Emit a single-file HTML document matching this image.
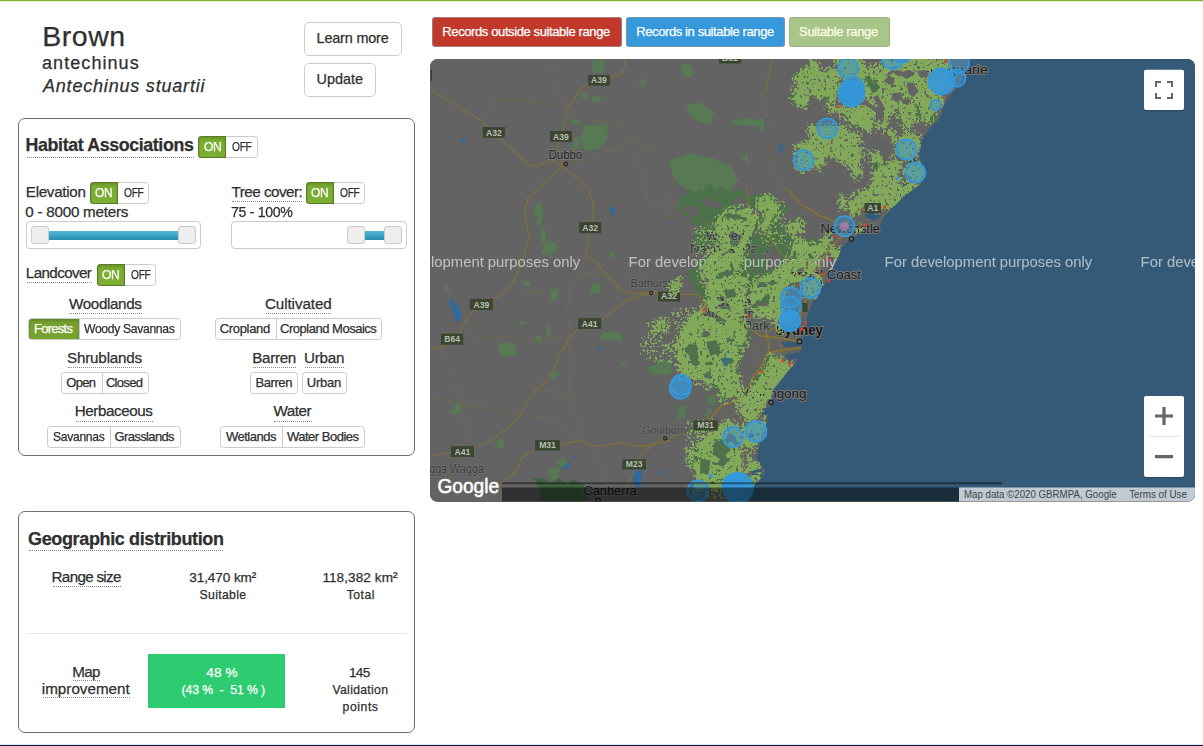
<!DOCTYPE html>
<html><head><meta charset="utf-8"><title>Brown antechinus</title>
<style>
*{box-sizing:border-box;margin:0;padding:0}
html,body{width:1203px;height:746px;overflow:hidden;background:#fff}
body{font-family:"Liberation Sans",sans-serif;color:#333;position:relative;font-size:14px}
.a{position:absolute;white-space:nowrap;line-height:1}
.t{position:absolute;white-space:nowrap;line-height:1;color:#2f2f2f;-webkit-text-stroke:0.25px}
.u{position:absolute;height:1px;border-top:1px dotted #8a8a8a}
.btn{border:1px solid #ccc;border-radius:5px;background:#fff}
.panel{border:1px solid #6e6e6e;border-radius:7px;background:#fff}
.tg{border:1px solid #ccc;border-radius:3.5px;background:#fff;height:22px}
.tg i{position:absolute;left:-1px;top:-1px;bottom:-1px;width:28px;background:#7cae33;border:1px solid rgba(0,0,0,.28);border-radius:3.5px 0 0 3.5px;box-shadow:inset 0 2px 3px rgba(0,0,0,.15)}
.tg b{position:absolute;font-weight:normal;font-size:12.2px;line-height:1;top:5px;letter-spacing:-0.3px}
.bg{border:1px solid #ccc;border-radius:3.5px;background:#fff;height:22px;overflow:hidden}
.bg i{position:absolute;top:0;bottom:0;width:1px;background:#ccc}
.bg em{position:absolute;top:0;bottom:0;left:0;background:#78a22f;box-shadow:inset 0 2px 3px rgba(0,0,0,.18)}
.sl{border:1px solid #ccc;border-radius:4px;background:#fff}
.sl i{position:absolute;display:block}
.sl .bar{top:9px;height:9px;background:linear-gradient(#55b9d8,#3aa4c6 50%,#2b8cab)}
.sl .hd{top:4px;width:18px;height:18px;border:1px solid #ccc;border-radius:3px;background:#eee}
.lg{border-radius:3px;height:30px;border:1px solid rgba(150,150,150,.7)}
</style></head><body>
<div class="a" style="left:0;top:0;width:1203px;height:1px;background:#7db52f"></div><div class="a" style="left:0;top:1px;width:1203px;height:1px;background:#e3efd2"></div>
<div class="a" style="left:0;top:745px;width:1203px;height:1px;background:#0b1c4e"></div><div class="a" style="left:0;top:744px;width:1203px;height:1px;background:#e4e7ee"></div>
<div class="a btn" style="left:304px;top:22px;width:98px;height:34px"></div>
<div class="a btn" style="left:304px;top:63px;width:72px;height:34px"></div>
<div class="a panel" style="left:18px;top:118px;width:397px;height:338px"></div>
<div class="a panel" style="left:18px;top:511px;width:397px;height:222px"></div>
<div class="a tg" style="left:198px;top:136px;width:60px"><i></i></div>
<div class="a tg" style="left:90px;top:182px;width:59px"><i></i></div>
<div class="a tg" style="left:306px;top:182px;width:59px"><i></i></div>
<div class="a tg" style="left:97px;top:264px;width:59px"><i></i></div>
<div class="a sl" style="left:26px;top:221px;width:175px;height:28px"><i class="bar" style="left:14px;width:147px"></i><i class="hd" style="left:4px"></i><i class="hd" style="left:151px"></i></div>
<div class="a sl" style="left:231px;top:221px;width:176px;height:28px"><i class="bar" style="left:125px;width:35px"></i><i class="hd" style="left:115px"></i><i class="hd" style="left:152px"></i></div>
<div class="a bg" style="left:28px;top:318px;width:153px"><em style="width:50px"></em><i style="left:50px"></i></div>
<div class="a bg" style="left:215px;top:318px;width:167px"><i style="left:60px"></i></div>
<div class="a bg" style="left:61px;top:372px;width:88px"><i style="left:40px"></i></div>
<div class="a bg" style="left:250px;top:372px;width:48px"></div>
<div class="a bg" style="left:302px;top:372px;width:45px"></div>
<div class="a bg" style="left:47px;top:426px;width:134px"><i style="left:62px"></i></div>
<div class="a bg" style="left:220px;top:426px;width:145px"><i style="left:61px"></i></div>
<div class="a" style="left:26px;top:633px;width:381px;height:1px;background:#e7e7e7"></div>
<div class="a" style="left:148px;top:654px;width:137px;height:54px;background:#2ecc71"></div>
<div class="a lg" style="left:432px;top:17px;width:190px;background:#c0392b"></div>
<div class="a lg" style="left:626px;top:17px;width:159px;background:#3498db"></div>
<div class="a lg" style="left:789px;top:17px;width:101px;background:#a9c68a;border-color:rgba(150,160,140,.5)"></div>
<div class="u" style="left:27px;top:157px;width:167px"></div>
<div class="u" style="left:232px;top:201px;width:70px"></div>
<div class="u" style="left:27px;top:282px;width:65px"></div>
<div class="u" style="left:69px;top:313px;width:73px"></div>
<div class="u" style="left:266px;top:313px;width:65px"></div>
<div class="u" style="left:68px;top:367px;width:74px"></div>
<div class="u" style="left:253px;top:367px;width:43px"></div>
<div class="u" style="left:305px;top:367px;width:39px"></div>
<div class="u" style="left:76px;top:421px;width:77px"></div>
<div class="u" style="left:274px;top:421px;width:38px"></div>
<div class="u" style="left:29px;top:550px;width:194px"></div>
<div class="u" style="left:53px;top:586px;width:68px"></div>
<div class="u" style="left:73px;top:680px;width:27px"></div>
<div class="u" style="left:43px;top:697px;width:87px"></div>
<div class="t" style="left:42.3px;top:22px;font-size:28.5px;letter-spacing:0.5px;transform:scaleX(1.0);transform-origin:0 0;">Brown</div>
<div class="t" style="left:42.0px;top:54px;font-size:18px;letter-spacing:1.07px;transform:scaleX(1.0);transform-origin:0 0;">antechinus</div>
<div class="t" style="left:43.0px;top:77px;font-size:18px;letter-spacing:0.8px;transform:scaleX(1.0);transform-origin:0 0;font-style:italic;">Antechinus stuartii</div>
<div class="t" style="left:316.6px;top:31px;font-size:14.4px;letter-spacing:-0.16px;transform:scaleX(1.0);transform-origin:0 0;">Learn more</div>
<div class="t" style="left:316.6px;top:72px;font-size:14.4px;letter-spacing:0.0px;transform:scaleX(1.0);transform-origin:0 0;">Update</div>
<div class="t" style="left:25.6px;top:137px;font-size:17.8px;letter-spacing:-0.37px;transform:scaleX(1.0);transform-origin:0 0;font-weight:bold;">Habitat Associations</div>
<div class="t" style="left:25.8px;top:184px;font-size:15.2px;letter-spacing:-0.3px;transform:scaleX(1.0);transform-origin:0 0;">Elevation</div>
<div class="t" style="left:25.3px;top:204px;font-size:15.2px;letter-spacing:-0.24px;transform:scaleX(1.0);transform-origin:0 0;">0 - 8000 meters</div>
<div class="t" style="left:231.6px;top:184px;font-size:15.2px;letter-spacing:-0.52px;transform:scaleX(1.0);transform-origin:0 0;">Tree cover:</div>
<div class="t" style="left:230.8px;top:204px;font-size:15.2px;letter-spacing:-0.35px;transform:scaleX(0.9308);transform-origin:0 0;">75 - 100%</div>
<div class="t" style="left:25.8px;top:265px;font-size:15.2px;letter-spacing:-0.6px;transform:scaleX(1.0);transform-origin:0 0;">Landcover</div>
<div class="t" style="left:69.0px;top:296px;font-size:15.2px;letter-spacing:-0.35px;transform:scaleX(1.0);transform-origin:0 0;">Woodlands</div>
<div class="t" style="left:264.9px;top:296px;font-size:15.2px;letter-spacing:-0.07px;transform:scaleX(1.0);transform-origin:0 0;">Cultivated</div>
<div class="t" style="left:67.0px;top:350px;font-size:15.2px;letter-spacing:-0.18px;transform:scaleX(1.0);transform-origin:0 0;">Shrublands</div>
<div class="t" style="left:252.3px;top:350px;font-size:15.2px;letter-spacing:-0.32px;transform:scaleX(1.0);transform-origin:0 0;">Barren</div>
<div class="t" style="left:304.0px;top:350px;font-size:15.2px;letter-spacing:-0.25px;transform:scaleX(1.0);transform-origin:0 0;">Urban</div>
<div class="t" style="left:74.8px;top:403px;font-size:15.2px;letter-spacing:-0.42px;transform:scaleX(1.0);transform-origin:0 0;">Herbaceous</div>
<div class="t" style="left:273.6px;top:403px;font-size:15.2px;letter-spacing:-0.5px;transform:scaleX(1.0);transform-origin:0 0;">Water</div>
<div class="t" style="left:34.0px;top:322px;font-size:13px;letter-spacing:-0.73px;transform:scaleX(1.0);transform-origin:0 0;color:#fff;">Forests</div>
<div class="t" style="left:84.4px;top:322px;font-size:13px;letter-spacing:-0.35px;transform:scaleX(0.9351);transform-origin:0 0;">Woody Savannas</div>
<div class="t" style="left:219.7px;top:322px;font-size:13px;letter-spacing:-0.31px;transform:scaleX(1.0);transform-origin:0 0;">Cropland</div>
<div class="t" style="left:280.0px;top:322px;font-size:13px;letter-spacing:-0.48px;transform:scaleX(1.0);transform-origin:0 0;">Cropland Mosaics</div>
<div class="t" style="left:66.2px;top:376px;font-size:13px;letter-spacing:-0.67px;transform:scaleX(1.0);transform-origin:0 0;">Open</div>
<div class="t" style="left:105.9px;top:376px;font-size:13px;letter-spacing:-0.68px;transform:scaleX(1.0);transform-origin:0 0;">Closed</div>
<div class="t" style="left:255.4px;top:376px;font-size:13px;letter-spacing:-0.4px;transform:scaleX(1.0);transform-origin:0 0;">Barren</div>
<div class="t" style="left:306.8px;top:376px;font-size:13px;letter-spacing:-0.25px;transform:scaleX(1.0);transform-origin:0 0;">Urban</div>
<div class="t" style="left:52.5px;top:430px;font-size:13px;letter-spacing:-0.35px;transform:scaleX(0.9353);transform-origin:0 0;">Savannas</div>
<div class="t" style="left:114.6px;top:430px;font-size:13px;letter-spacing:-0.64px;transform:scaleX(1.0);transform-origin:0 0;">Grasslands</div>
<div class="t" style="left:225.9px;top:430px;font-size:13px;letter-spacing:-0.49px;transform:scaleX(1.0);transform-origin:0 0;">Wetlands</div>
<div class="t" style="left:286.9px;top:430px;font-size:13px;letter-spacing:-0.49px;transform:scaleX(1.0);transform-origin:0 0;">Water Bodies</div>
<div class="t" style="left:28.1px;top:530px;font-size:18px;letter-spacing:-0.37px;transform:scaleX(1.0);transform-origin:0 0;font-weight:bold;">Geographic distribution</div>
<div class="t" style="left:51.6px;top:569px;font-size:15.2px;letter-spacing:-0.69px;transform:scaleX(1.0);transform-origin:0 0;">Range size</div>
<div class="t" style="left:189.2px;top:571px;font-size:13.6px;letter-spacing:-0.09px;transform:scaleX(1.0);transform-origin:0 0;">31,470 km²</div>
<div class="t" style="left:199.6px;top:589px;font-size:12.2px;letter-spacing:0.34px;transform:scaleX(1.0);transform-origin:0 0;">Suitable</div>
<div class="t" style="left:322.4px;top:571px;font-size:13.6px;letter-spacing:0.06px;transform:scaleX(1.0);transform-origin:0 0;">118,382 km²</div>
<div class="t" style="left:346.8px;top:589px;font-size:12.2px;letter-spacing:0.45px;transform:scaleX(1.0);transform-origin:0 0;">Total</div>
<div class="t" style="left:206.2px;top:666px;font-size:13.6px;letter-spacing:0.13px;transform:scaleX(1.0);transform-origin:0 0;color:#fff;">48 %</div>
<div class="t" style="left:181.5px;top:684px;font-size:12.2px;letter-spacing:-0.07px;transform:scaleX(1.0);transform-origin:0 0;color:#fff;">(43 %  -  51 % )</div>
<div class="t" style="left:72.2px;top:664px;font-size:15.2px;letter-spacing:-0.6px;transform:scaleX(1.0);transform-origin:0 0;">Map</div>
<div class="t" style="left:41.8px;top:681px;font-size:15.2px;letter-spacing:0.02px;transform:scaleX(1.0);transform-origin:0 0;">improvement</div>
<div class="t" style="left:348.9px;top:666px;font-size:13.6px;letter-spacing:-0.6px;transform:scaleX(1.0);transform-origin:0 0;">145</div>
<div class="t" style="left:332.5px;top:684px;font-size:12.2px;letter-spacing:0.31px;transform:scaleX(1.0);transform-origin:0 0;">Validation</div>
<div class="t" style="left:342.6px;top:701px;font-size:12.2px;letter-spacing:0.56px;transform:scaleX(1.0);transform-origin:0 0;">points</div>
<div class="t" style="left:442.3px;top:25px;font-size:13px;letter-spacing:-0.39px;transform:scaleX(1.0);transform-origin:0 0;color:#fff;">Records outside suitable range</div>
<div class="t" style="left:636.2px;top:25px;font-size:13px;letter-spacing:-0.39px;transform:scaleX(1.0);transform-origin:0 0;color:#fff;">Records in suitable range</div>
<div class="t" style="left:799.1px;top:25px;font-size:13px;letter-spacing:-0.37px;transform:scaleX(1.0);transform-origin:0 0;color:#fffbe8;">Suitable range</div>
<div class="t" style="left:203.9px;top:140px;font-size:13px;letter-spacing:-0.35px;transform:scaleX(0.9236);transform-origin:0 0;color:#fff;">ON</div>
<div class="t" style="left:232.2px;top:140px;font-size:13px;letter-spacing:-0.35px;transform:scaleX(0.7843);transform-origin:0 0;">OFF</div>
<div class="t" style="left:95.2px;top:186px;font-size:13px;letter-spacing:-0.35px;transform:scaleX(0.9236);transform-origin:0 0;color:#fff;">ON</div>
<div class="t" style="left:123.9px;top:186px;font-size:13px;letter-spacing:-0.35px;transform:scaleX(0.7843);transform-origin:0 0;">OFF</div>
<div class="t" style="left:311.1px;top:186px;font-size:13px;letter-spacing:-0.35px;transform:scaleX(0.9236);transform-origin:0 0;color:#fff;">ON</div>
<div class="t" style="left:339.9px;top:186px;font-size:13px;letter-spacing:-0.35px;transform:scaleX(0.7843);transform-origin:0 0;">OFF</div>
<div class="t" style="left:102.2px;top:268px;font-size:13px;letter-spacing:-0.35px;transform:scaleX(0.9236);transform-origin:0 0;color:#fff;">ON</div>
<div class="t" style="left:131.0px;top:268px;font-size:13px;letter-spacing:-0.35px;transform:scaleX(0.7843);transform-origin:0 0;">OFF</div>
<div class="a" id="map" style="left:430px;top:59px;width:765px;height:443px;border-radius:8px;overflow:hidden;background:#636363">
<svg width="765" height="443" viewBox="430 59 765 443" style="position:absolute;left:0;top:0" font-family="Liberation Sans, sans-serif">
<rect x="430" y="59" width="765" height="442" fill="#636363"/>
<path d="M584.8 125.3 L607.9 124.3 L606.9 139.4 L598.8 149.5 L584.8 150.5 L580.8 139.4Z" fill="#577a55"/>
<path d="M570.7 118.3 L580.8 121.3 L579.7 126.3 L571.7 124.3Z" fill="#577a55"/>
<path d="M573.7 137.4 L579.7 137.8 L578.7 149.5 L572.3 149.1Z" fill="#577a55"/>
<path d="M592.8 60.0 L604.9 60.0 L602.9 73.1 L593.8 72.7 L590.8 66.0Z" fill="#577a55"/>
<path d="M580.8 93.2 L586.8 93.6 L586.4 98.4 L581.2 98.0Z" fill="#577a55"/>
<path d="M638.0 85.1 L642.1 81.5 L645.5 86.7Z" fill="#577a55"/>
<path d="M535.5 208.9 L537.5 202.1 L540.6 203.3 L541.8 208.9Z" fill="#577a55"/>
<path d="M532.5 213.1 L536.5 203.0 L541.0 202.4 L543.8 212.1 L541.0 226.1 L536.5 224.5 L537.7 217.1Z" fill="#577a55"/>
<path d="M540.2 227.1 L544.6 230.2 L546.2 241.2 L541.6 243.2Z" fill="#577a55"/>
<path d="M544.6 242.6 L554.6 242.2 L559.6 249.2 L552.6 252.3 L550.6 258.3 L545.6 254.3 L541.0 254.7Z" fill="#577a55"/>
<path d="M592.4 282.0 L600.9 284.4 L599.8 292.9 L589.8 293.7Z" fill="#577a55"/>
<path d="M550.6 289.4 L559.6 288.4 L557.0 300.5 L550.6 299.5Z" fill="#577a55"/>
<path d="M521.5 280.0 L530.1 282.0 L529.3 286.8 L524.5 286.0Z" fill="#577a55"/>
<path d="M608.9 252.7 L613.3 251.3 L614.9 259.5 L610.5 257.1Z" fill="#577a55"/>
<path d="M548.2 322.6 L550.6 330.7 L551.6 337.1 L546.2 335.1 L546.6 328.6Z" fill="#577a55"/>
<path d="M534.5 336.7 L541.0 334.3 L541.8 343.7 L537.5 343.1Z" fill="#577a55"/>
<path d="M520.1 321.0 L526.1 321.8 L525.5 325.0 L520.5 323.8Z" fill="#577a55"/>
<path d="M600.9 335.1 L604.9 333.1 L604.5 340.7 L600.1 339.5Z" fill="#577a55"/>
<path d="M606.9 332.7 L613.3 331.1 L612.5 338.7 L607.7 337.9Z" fill="#577a55"/>
<path d="M614.9 333.7 L621.0 334.3 L621.4 341.7 L615.9 340.7Z" fill="#577a55"/>
<path d="M445.7 285.4 L448.5 284.0 L449.3 292.5 L446.5 292.1Z" fill="#577a55"/>
<path d="M498.3 345.7 L506.4 343.1 L508.8 349.9 L499.3 349.9Z" fill="#577a55"/>
<path d="M498.6 345.0 L515.8 345.0 L515.4 355.7 L507.2 356.8 L502.9 351.4 L499.1 352.5Z" fill="#577a55"/>
<path d="M551.2 372.9 L555.5 370.7 L559.1 374.0 L554.4 377.2 L551.8 380.4Z" fill="#577a55"/>
<path d="M450.4 413.6 L454.0 405.5 L457.0 415.8Z" fill="#577a55"/>
<path d="M496.9 441.9 L502.9 441.5 L502.5 449.2 L497.6 448.4Z" fill="#577a55"/>
<path d="M655.2 362.2 L670.0 360.0 L670.0 375.0 L659.5 374.6Z" fill="#577a55"/>
<path d="M620.9 361.7 L625.2 361.1 L625.2 366.0 L621.3 366.0Z" fill="#577a55"/>
<path d="M557.0 459.7 L564.0 458.7 L567.3 465.1 L560.8 468.3Z" fill="#577a55"/>
<path d="M548.0 469.4 L559.8 467.3 L558.7 479.0 L552.3 480.1Z" fill="#577a55"/>
<path d="M534.0 478.0 L545.8 479.0 L550.1 484.4 L558.7 478.0 L567.3 484.4 L572.6 479.0 L586.6 486.6 L587.6 501.6 L541.5 501.6 L538.3 486.6Z" fill="#3f6340"/>
<path d="M681.0 66.0 L688.0 63.0 L694.0 72.0 L690.0 79.0 L683.0 76.0Z" fill="#577a55"/>
<path d="M686.0 105.0 L700.0 102.0 L714.0 112.0 L710.0 124.0 L698.0 121.0 L690.0 116.0Z" fill="#577a55"/>
<path d="M731.0 121.0 L748.0 118.0 L763.0 121.0 L760.0 127.0 L745.0 125.0 L733.0 126.0Z" fill="#577a55"/>
<path d="M641.0 82.0 L644.0 78.0 L647.0 84.0Z" fill="#577a55"/>
<path d="M592.0 97.0 L600.0 95.0 L601.0 102.0 L593.0 103.0Z" fill="#577a55"/>
<path d="M669.0 160.0 L690.0 153.0 L712.0 158.0 L730.0 165.0 L738.0 180.0 L728.0 195.0 L710.0 190.0 L695.0 193.0 L680.0 185.0 L672.0 175.0Z" fill="#577a55"/>
<path d="M741.0 158.0 L747.0 152.0 L750.0 164.0Z" fill="#577a55"/>
<path d="M498.0 345.0 L510.0 342.0 L516.0 352.0 L508.0 358.0 L500.0 355.0Z" fill="#577a55"/>
<path d="M602.0 333.0 L615.0 331.0 L624.0 336.0 L618.0 341.0 L604.0 340.0Z" fill="#577a55"/>
<path d="M648.0 367.0 L660.0 364.0 L669.0 369.0 L664.0 375.0 L650.0 374.0Z" fill="#577a55"/>
<path d="M455.0 404.0 L460.0 402.0 L462.0 412.0 L456.0 414.0Z" fill="#577a55"/>
<path d="M497.0 440.0 L503.0 439.0 L504.0 448.0 L498.0 448.0Z" fill="#577a55"/>
<g filter="url(#texpark)"><path d="M678.2 200.1 L686.2 192.0 L700.3 189.0 L752.6 189.0 L760.6 196.0 L768.6 196.0 L780.7 206.1 L784.7 216.1 L780.7 224.2 L788.7 230.2 L796.8 222.2 L802.8 226.2 L800.8 236.2 L808.8 242.3 L820.9 240.3 L824.9 246.3 L816.9 256.3 L808.8 266.4 L800.8 274.4 L792.8 280.5 L784.7 284.5 L780.7 290.5 L778.7 302.6 L768.6 302.6 L760.6 310.6 L752.6 302.6 L744.5 294.5 L736.5 290.5 L728.4 294.5 L720.4 302.6 L716.4 310.6 L708.3 314.6 L704.3 306.6 L700.3 294.5 L698.3 284.5 L692.3 278.4 L694.3 270.4 L702.3 266.4 L706.3 258.3 L704.3 250.3 L698.3 248.3 L692.3 240.3 L696.3 230.2 L692.3 222.2 L684.2 214.1 L676.2 206.1Z" fill="#4d724b"/></g>
<g filter="url(#texpark)"><path d="M686.2 339.9 L690.3 320.7 L700.3 310.6 L712.4 302.6 L744.5 298.5 L752.6 310.6 L748.5 330.7 L746.5 342.8 L740.5 370.9 L736.5 391.0 L724.4 401.1 L716.4 391.0 L706.3 381.0 L696.3 370.9 L688.2 362.9 L680.2 354.8 L683.2 346.8Z" fill="#4d724b"/></g>
<path d="M760.0 195.7 L772.1 193.7 L778.1 208.9 L760.0 208.9Z" fill="#577a55"/>
<path d="M760.0 119.3 L763.0 117.3 L765.0 129.4 L761.0 133.4Z" fill="#577a55"/>
<path d="M864.5 75.1 L872.6 73.1 L880.6 89.2 L878.6 97.2 L870.6 95.2Z" fill="#4d724b"/>
<path d="M890.7 79.1 L900.7 77.1 L904.7 95.2 L900.7 107.2 L892.7 99.2Z" fill="#4d724b"/>
<path d="M912.8 105.2 L920.8 103.2 L920.8 119.3 L914.8 119.3Z" fill="#4d724b"/>
<path d="M796.2 71.1 L812.3 69.1 L810.3 87.1 L800.2 89.2Z" fill="#4d724b"/>
<path d="M930.9 114.3 L937.9 113.3 L936.9 123.3 L930.9 124.3Z" fill="#4d724b"/>
<path d="M844.4 115.3 L854.5 113.3 L864.5 125.3 L856.5 129.4Z" fill="#4d724b"/>
<path d="M820.3 89.2 L828.3 87.1 L830.4 99.2 L822.3 99.2Z" fill="#4d724b"/>
<path d="M872.6 159.5 L880.6 155.5 L882.6 171.6 L874.6 171.6Z" fill="#4d724b"/>
<path d="M788.1 95.2 L796.2 93.2 L806.2 106.2 L800.2 107.2Z" fill="#4d724b"/>
<g filter="url(#texpark)"><path d="M760.6 370.2 L772.7 356.1 L780.7 360.2 L776.7 374.2 L768.6 390.3 L760.6 402.4 L752.6 396.3 L756.6 382.3Z" fill="#4d724b"/></g>
<g filter="url(#texpark)"><path d="M688.2 450.6 L700.3 442.6 L716.4 434.5 L732.5 442.6 L740.5 458.6 L744.5 479.9 L736.5 490.8 L700.3 490.8 L692.3 470.7 L686.2 460.7Z" fill="#4d724b"/></g>
<path d="M656.1 360.2 L670.2 362.2 L672.2 372.2 L660.1 374.2Z" fill="#577a55"/>
<path d="M678.2 406.4 L686.2 405.4 L685.2 416.4 L678.2 419.4Z" fill="#577a55"/>
<path d="M706.3 396.3 L714.4 394.3 L716.4 404.4 L709.3 406.4Z" fill="#577a55"/>
<path d="M707.3 408.4 L712.4 409.4 L708.3 418.4 L704.3 417.4Z" fill="#577a55"/>
<path d="M706.3 370.2 L724.4 366.2 L720.4 378.2 L708.3 386.3Z" fill="#5a6f5a"/>
<path d="M969.3 59 L966 70 L962 80 L956.6 88.5 L947.2 99.2 L943.2 108.6 L939.2 119.3 L928.4 130 L921.7 140.8 L918.8 155.5 L921 163.5 L925.8 171.6 L920.8 183.6 L912.8 189.7 L904.7 195.7 L896.7 203.7 L890.7 209 L884 217 L880 225.2 L865.1 228.2 L855.1 236.2 L849 240.3 L841 248.3 L838 258.3 L833 266.4 L829 278.4 L820.9 288.5 L816.9 298.5 L810.9 306.6 L806.8 318.6 L806.8 330.7 L802.8 338 L800.8 350.1 L794.8 364.2 L788.7 370.2 L780.7 380.3 L772.7 390.3 L770.7 402.4 L768.6 414.4 L766.6 420.5 L764.6 434.5 L758.6 446.6 L756.6 458.6 L761.7 465.8 L764.7 471.8 L759.7 479.8 L751.7 487.8 L747.7 501 L1195 501 L1195 59Z" fill="#355a77"/>
<path d="M869.1 209.1 L880.0 208.1 L880.0 218.1 L874.2 220.2 L865.1 217.1Z" fill="#355a77"/>
<path d="M849.0 218.1 L851.1 214.1 L853.5 220.2 L850.1 225.2Z" fill="#355a77"/>
<path d="M828.9 256.3 L836.0 248.3 L839.0 250.3 L833.0 260.4 L829.9 263.4Z" fill="#355a77"/>
<path d="M825.9 235.2 L828.9 232.2 L830.6 238.2 L827.3 242.3Z" fill="#355a77"/>
<path d="M812.9 299.5 L818.9 298.5 L817.9 302.6 L812.9 303.6Z" fill="#355a77"/>
<path d="M784.7 355.1 L798.8 352.1 L799.8 357.1 L788.7 360.2Z" fill="#355a77"/>
<path d="M780.7 342.1 L800.8 341.1 L800.8 346.1 L784.7 347.1Z" fill="#355a77"/>
<path d="M760.6 410.4 L768.6 406.4 L770.7 412.4 L762.6 416.4Z" fill="#355a77"/>
<path d="M750.7 469.8 L757.7 465.8 L761.7 469.8 L760.7 478.8 L753.7 479.8Z" fill="#355a77"/>
<path d="M901.7 184.6 L910.8 181.6 L912.8 187.6 L904.7 191.7 L898.7 197.7 L894.7 195.7Z" fill="#355a77"/>
<path d="M907.7 159.5 L915.8 157.5 L917.8 161.5 L909.7 164.5Z" fill="#355a77"/>
<path d="M449.1 298.5 L453.1 299.5 L454.1 304.5 L458.1 305.5 L461.2 314.6 L460.2 320.6 L456.1 321.6 L453.1 314.6 L452.1 307.5 L449.1 304.5Z" fill="#2f6a9e"/>
<path d="M611.9 205.0 L614.5 211.1 L614.9 216.1 L611.9 214.1 L609.3 210.1Z" fill="#2f6a9e"/>
<path d="M632.7 470.5 L642.3 470.5 L640.2 486.6 L633.8 486.6Z" fill="#2f6a9e"/>
<path d="M561.9 466.2 L571.6 461.9 L567.3 469.4Z" fill="#2f6a9e"/>
<path d="M596.2 347.1 L600.5 347.6 L599.0 351.9Z" fill="#2f6a9e"/>
<path d="M659.5 471.5 L662.7 470.5 L661.6 474.8Z" fill="#2f6a9e"/>
<path d="M572.6 456.5 L574.8 455.5 L574.6 459.7Z" fill="#2f6a9e"/>
<path d="M726.4 350.1 L730.5 351.1 L728.4 360.2 L723.4 368.2 L720.4 373.2 L719.4 369.2 L724.4 360.2Z" fill="#2f6a9e"/>
<path d="M779.1 146.4 L785.1 142.4 L782.5 147.4 L781.1 153.5 L778.1 152.5Z" fill="#2f6a9e"/>
<path d="M460.2 139.8 L466.2 139.0 L464.6 143.0 L461.2 141.8Z" fill="#2f6a9e"/>
<path d="M488.3 78.1 L491.9 81.1 L490.3 81.5Z" fill="#2f6a9e"/>
<path d="M670.2 221.2 L674.2 223.2 L672.2 225.2Z" fill="#2f6a9e"/>
<path d="M659.1 471.7 L663.1 470.7 L661.1 475.7Z" fill="#2f6a9e"/>
<path d="M640.0 470.7 L642.0 471.7 L641.0 478.7 L640.0 479.7Z" fill="#2f6a9e"/>
<path d="M430.0 89.2 L482.3 121.3 L528.5 164.5 L536.5 166.5 L550.6 159.5 L562.7 165.5" fill="none" stroke="#80703a" stroke-width="1.1" stroke-linejoin="round" stroke-linecap="round"/>
<path d="M562.7 165.5 L588.8 189.7 L593.8 208.9" fill="none" stroke="#80703a" stroke-width="1.1" stroke-linejoin="round" stroke-linecap="round"/>
<path d="M562.7 165.5 L528.5 197.7 L525.5 208.9" fill="none" stroke="#80703a" stroke-width="1.1" stroke-linejoin="round" stroke-linecap="round"/>
<path d="M562.7 165.5 L557.6 147.4 L564.7 125.3 L566.7 109.3 L582.8 87.1 L596.8 79.1 L618.9 75.1 L626.0 66.0 L624.0 59.0" fill="none" stroke="#80703a" stroke-width="1.1" stroke-linejoin="round" stroke-linecap="round"/>
<path d="M482.3 121.3 L494.3 102.2 L510.4 99.2 L536.5 102.2 L568.7 108.2" fill="none" stroke="#756b4a" stroke-width="0.7" stroke-linejoin="round" stroke-linecap="round"/>
<path d="M549.6 59.0 L554.6 79.1 L568.7 108.2 L582.8 119.3 L604.9 121.3 L621.0 123.3 L633.0 139.4 L653.1 147.4 L670.0 142.4" fill="none" stroke="#756b4a" stroke-width="0.7" stroke-linejoin="round" stroke-linecap="round"/>
<path d="M633.0 139.4 L614.9 151.5 L602.9 151.5 L584.8 163.5 L570.7 159.5" fill="none" stroke="#756b4a" stroke-width="0.7" stroke-linejoin="round" stroke-linecap="round"/>
<path d="M643.1 143.4 L637.0 159.5 L645.1 179.6 L647.1 199.7 L670.0 208.9" fill="none" stroke="#756b4a" stroke-width="0.7" stroke-linejoin="round" stroke-linecap="round"/>
<path d="M593.8 198.0 L592.8 216.1 L588.8 236.2 L585.8 250.3 L588.8 258.3 L596.8 262.3 L606.9 276.4 L621.0 290.5 L631.0 293.5 L651.1 291.5 L670.0 292.5" fill="none" stroke="#80703a" stroke-width="1.1" stroke-linejoin="round" stroke-linecap="round"/>
<path d="M527.5 198.0 L524.5 212.1 L529.5 238.2 L523.5 256.3 L518.4 272.4 L510.4 286.4 L498.3 296.5 L480.3 304.5 L470.2 314.6 L463.2 324.6 L461.2 332.7 L450.1 342.7 L436.0 348.7 L430.0 349.9" fill="none" stroke="#80703a" stroke-width="1.1" stroke-linejoin="round" stroke-linecap="round"/>
<path d="M651.1 292.5 L625.0 301.5 L602.9 318.6 L578.7 328.6 L568.7 338.7 L562.7 349.9" fill="none" stroke="#80703a" stroke-width="1.1" stroke-linejoin="round" stroke-linecap="round"/>
<path d="M582.8 272.4 L570.7 280.4 L568.7 300.5 L566.7 312.6 L569.7 328.6 L568.7 349.9" fill="none" stroke="#756b4a" stroke-width="0.7" stroke-linejoin="round" stroke-linecap="round"/>
<path d="M524.5 291.5 L540.6 293.5 L552.6 287.4" fill="none" stroke="#756b4a" stroke-width="0.7" stroke-linejoin="round" stroke-linecap="round"/>
<path d="M463.2 328.6 L480.3 338.7 L506.4 336.7 L536.5 340.7 L568.7 336.7" fill="none" stroke="#756b4a" stroke-width="0.7" stroke-linejoin="round" stroke-linecap="round"/>
<path d="M585.8 250.3 L583.8 272.4 L606.9 276.4" fill="none" stroke="#756b4a" stroke-width="0.7" stroke-linejoin="round" stroke-linecap="round"/>
<path d="M649.1 200.0 L661.2 212.1 L670.0 220.1" fill="none" stroke="#756b4a" stroke-width="0.7" stroke-linejoin="round" stroke-linecap="round"/>
<path d="M564.0 345.0 L554.4 366.4 L546.9 381.5 L535.1 390.0 L524.4 407.2 L522.2 413.6 L509.4 426.5 L492.2 439.4 L474.0 447.9 L451.4 452.2 L430.0 456.5" fill="none" stroke="#80703a" stroke-width="1.1" stroke-linejoin="round" stroke-linecap="round"/>
<path d="M670.0 440.4 L653.1 444.7 L633.8 445.8 L618.7 442.6 L605.9 445.8 L593.0 445.8 L580.1 440.4 L569.4 442.6 L559.8 445.8 L535.1 450.1 L522.2 457.6 L515.8 471.5 L502.9 482.3 L494.3 495.1" fill="none" stroke="#80703a" stroke-width="1.1" stroke-linejoin="round" stroke-linecap="round"/>
<path d="M653.1 444.7 L638.0 458.7 L632.7 473.7 L629.5 482.3 L623.0 499.4" fill="none" stroke="#80703a" stroke-width="1.1" stroke-linejoin="round" stroke-linecap="round"/>
<path d="M430.0 395.4 L464.3 405.1 L522.2 413.6 L548.0 419.0 L567.3 432.9 L580.1 440.4" fill="none" stroke="#756b4a" stroke-width="0.7" stroke-linejoin="round" stroke-linecap="round"/>
<path d="M438.6 345.0 L451.4 377.2 L464.3 405.1 L462.2 415.8 L469.7 432.9 L462.2 447.9 L451.4 471.5 L442.9 495.1" fill="none" stroke="#756b4a" stroke-width="0.7" stroke-linejoin="round" stroke-linecap="round"/>
<path d="M567.3 345.0 L573.7 362.2 L568.3 381.5 L571.6 405.1 L580.1 426.5 L584.4 440.4 L593.0 447.9 L601.6 465.1 L603.7 482.3 L599.4 499.4" fill="none" stroke="#756b4a" stroke-width="0.7" stroke-linejoin="round" stroke-linecap="round"/>
<path d="M535.1 390.0 L554.4 391.1 L571.6 402.9" fill="none" stroke="#756b4a" stroke-width="0.7" stroke-linejoin="round" stroke-linecap="round"/>
<path d="M772.1 59.0 L766.0 89.2 L760.0 97.2" fill="none" stroke="#80703a" stroke-width="1.1" stroke-linejoin="round" stroke-linecap="round"/>
<path d="M760.0 109.3 L772.1 119.3 L768.0 143.4 L772.1 167.5 L784.1 187.6 L800.2 208.9" fill="none" stroke="#756b4a" stroke-width="0.8" stroke-linejoin="round" stroke-linecap="round"/>
<path d="M760.0 175.6 L770.1 171.6" fill="none" stroke="#756b4a" stroke-width="0.7" stroke-linejoin="round" stroke-linecap="round"/>
<path d="M788.7 190.0 L800.8 204.1 L810.9 210.1 L820.9 216.1 L833.0 220.2 L841.0 230.2 L845.0 236.2" fill="none" stroke="#8a742f" stroke-width="1.3" stroke-linejoin="round" stroke-linecap="round"/>
<path d="M746.5 188.0 L749.5 210.1 L760.6 226.2 L772.7 242.3 L786.7 260.4 L800.8 264.4 L814.9 270.4 L824.9 274.4" fill="none" stroke="#80703a" stroke-width="1.1" stroke-linejoin="round" stroke-linecap="round"/>
<path d="M880.0 206.1 L857.1 210.1 L847.0 222.2 L841.0 236.2 L828.9 250.3 L820.9 262.4 L818.9 274.4 L810.9 286.5 L804.8 302.6 L800.8 314.6 L798.8 326.7" fill="none" stroke="#8a742f" stroke-width="1.6" stroke-linejoin="round" stroke-linecap="round"/>
<path d="M664.1 190.0 L680.2 208.1 L704.3 222.2 L726.4 226.2 L749.5 210.1" fill="none" stroke="#756b4a" stroke-width="0.7" stroke-linejoin="round" stroke-linecap="round"/>
<path d="M640.0 294.5 L651.1 292.9 L680.2 294.5 L698.3 294.5 L708.3 310.6 L724.4 318.6 L744.5 320.7 L760.6 326.7 L780.7 330.7 L792.8 334.7" fill="none" stroke="#8a742f" stroke-width="1.2" stroke-linejoin="round" stroke-linecap="round"/>
<path d="M772.7 242.3 L760.6 250.3 L752.6 266.4 L730.5 294.5" fill="none" stroke="#756b4a" stroke-width="0.7" stroke-linejoin="round" stroke-linecap="round"/>
<path d="M800.8 264.4 L796.8 278.4 L800.8 286.5" fill="none" stroke="#756b4a" stroke-width="0.7" stroke-linejoin="round" stroke-linecap="round"/>
<path d="M752.6 330.0 L760.6 336.0 L780.7 338.0 L798.8 342.1" fill="none" stroke="#8a742f" stroke-width="1.6" stroke-linejoin="round" stroke-linecap="round"/>
<path d="M764.6 326.0 L768.6 342.1 L768.6 352.1 L800.8 348.1" fill="none" stroke="#8a742f" stroke-width="1.8" stroke-linejoin="round" stroke-linecap="round"/>
<path d="M768.6 352.1 L762.6 364.2 L752.6 378.2 L748.5 386.3 L736.5 400.4 L720.4 406.4 L714.4 414.4 L706.3 422.5" fill="none" stroke="#8a742f" stroke-width="1.8" stroke-linejoin="round" stroke-linecap="round"/>
<path d="M706.3 422.5 L690.3 432.5 L664.1 438.5 L652.1 444.6 L640.0 446.6" fill="none" stroke="#80703a" stroke-width="1.1" stroke-linejoin="round" stroke-linecap="round"/>
<path d="M780.7 338.0 L780.7 360.2 L776.7 382.3 L768.6 396.3 L760.6 414.4 L752.6 420.5 L744.5 442.6 L742.5 470.7 L740.5 479.9" fill="none" stroke="#80703a" stroke-width="1.0" stroke-linejoin="round" stroke-linecap="round"/>
<path d="M720.4 406.4 L730.5 418.4 L746.5 418.4 L760.6 414.4" fill="none" stroke="#756b4a" stroke-width="0.8" stroke-linejoin="round" stroke-linecap="round"/>
<path d="M752.6 350.1 L756.6 362.2 L748.5 370.2" fill="none" stroke="#756b4a" stroke-width="0.8" stroke-linejoin="round" stroke-linecap="round"/>
<path d="M652.1 444.6 L646.0 454.6 L640.0 450.6" fill="none" stroke="#756b4a" stroke-width="0.8" stroke-linejoin="round" stroke-linecap="round"/>
<rect x="588.2" y="75.0" width="21.7" height="10.7" fill="#3b4630"/><text x="599.0" y="83.4" font-size="8.6" font-weight="bold" fill="#b9bdb2" text-anchor="middle">A39</text>
<rect x="482.9" y="127.0" width="22.1" height="10.8" fill="#3b4630"/><text x="493.9" y="135.5" font-size="8.6" font-weight="bold" fill="#b9bdb2" text-anchor="middle">A32</text>
<rect x="550.0" y="131.0" width="21.9" height="10.8" fill="#3b4630"/><text x="561.0" y="139.5" font-size="8.6" font-weight="bold" fill="#b9bdb2" text-anchor="middle">A39</text>
<rect x="579.1" y="222.1" width="22.2" height="11.1" fill="#3b4630"/><text x="590.2" y="230.9" font-size="8.6" font-weight="bold" fill="#b9bdb2" text-anchor="middle">A32</text>
<rect x="469.8" y="298.9" width="23.1" height="11.1" fill="#3b4630"/><text x="481.4" y="307.7" font-size="8.6" font-weight="bold" fill="#b9bdb2" text-anchor="middle">A39</text>
<rect x="441.0" y="333.7" width="22.2" height="11.0" fill="#3b4630"/><text x="452.1" y="342.4" font-size="8.6" font-weight="bold" fill="#b9bdb2" text-anchor="middle">B64</text>
<rect x="578.1" y="318.2" width="23.2" height="10.8" fill="#3b4630"/><text x="589.7" y="326.7" font-size="8.6" font-weight="bold" fill="#b9bdb2" text-anchor="middle">A41</text>
<rect x="451.0" y="446.2" width="23.0" height="10.8" fill="#3b4630"/><text x="462.5" y="454.7" font-size="8.6" font-weight="bold" fill="#b9bdb2" text-anchor="middle">A41</text>
<rect x="535.1" y="440.0" width="24.7" height="10.7" fill="#3b4630"/><text x="547.5" y="448.4" font-size="8.6" font-weight="bold" fill="#b9bdb2" text-anchor="middle">M31</text>
<rect x="622.4" y="459.3" width="23.6" height="10.1" fill="#3b4630"/><text x="634.2" y="467.1" font-size="8.6" font-weight="bold" fill="#b9bdb2" text-anchor="middle">M23</text>
<rect x="658.0" y="291.5" width="22.0" height="10.0" fill="#3b4630"/><text x="669.0" y="299.2" font-size="8.6" font-weight="bold" fill="#b9bdb2" text-anchor="middle">A32</text>
<rect x="719.0" y="59.0" width="22.0" height="4.5" fill="#3b4630"/><text x="730.0" y="61.2" font-size="8.6" font-weight="bold" fill="#b9bdb2" text-anchor="middle">B51</text>
<rect x="802.5" y="303.0" width="5.0" height="9.0" fill="#3b4630"/><text x="805.0" y="309.7" font-size="8.6" font-weight="bold" fill="#b9bdb2" text-anchor="middle"></text>
<text x="548.6" y="158.9" font-size="12.5" textLength="33.6" lengthAdjust="spacingAndGlyphs" fill="#262626" font-weight="normal" opacity="1" stroke="#787878" stroke-width="1.8" stroke-linejoin="round" style="paint-order:stroke">Dubbo</text>
<circle cx="565.7" cy="164.1" r="1.8" fill="#6a6a6a" fill-opacity=".6" stroke="#1c1c1c" stroke-width="1.1"/>
<text x="630.4" y="287.3" font-size="11.2" textLength="40.6" lengthAdjust="spacingAndGlyphs" fill="#3a3a3a" font-weight="normal" opacity="1" stroke="#787878" stroke-width="1.2" stroke-linejoin="round" style="paint-order:stroke">Bathurst</text>
<circle cx="651.1" cy="292.9" r="1.6" fill="#6a6a6a" fill-opacity=".6" stroke="#1c1c1c" stroke-width="1.1"/>
<text x="642.4" y="433.5" font-size="11.2" textLength="43.8" lengthAdjust="spacingAndGlyphs" fill="#3d3d3d" font-weight="normal" opacity="1" stroke="#787878" stroke-width="1.2" stroke-linejoin="round" style="paint-order:stroke">Goulburn</text>
<circle cx="665.2" cy="438.4" r="1.6" fill="#6a6a6a" fill-opacity=".6" stroke="#1c1c1c" stroke-width="1.1"/>
<text x="413.5" y="473.3" font-size="12" textLength="70.1" lengthAdjust="spacingAndGlyphs" fill="#3a3a3a" font-weight="normal" opacity="1" stroke="#787878" stroke-width="1.2" stroke-linejoin="round" style="paint-order:stroke">Wagga Wagga</text>
<text x="583.4" y="494.5" font-size="13.2" textLength="53.6" lengthAdjust="spacingAndGlyphs" fill="#161616" font-weight="normal" opacity="1" stroke="#787878" stroke-width="1.8" stroke-linejoin="round" style="paint-order:stroke">Canberra</text>
<circle cx="598" cy="500.5" r="2.2" fill="#6a6a6a" fill-opacity=".6" stroke="#1c1c1c" stroke-width="1.1"/>
<text x="706" y="240.3" font-size="12.5" textLength="45.6" lengthAdjust="spacingAndGlyphs" fill="#2a3a2a" font-weight="normal" opacity="1" stroke="#787878" stroke-width="1.8" stroke-linejoin="round" style="paint-order:stroke">Wollemi</text>
<text x="690" y="253.3" font-size="12.5" textLength="78.6" lengthAdjust="spacingAndGlyphs" fill="#2a3a2a" font-weight="normal" opacity="1" stroke="#787878" stroke-width="1.8" stroke-linejoin="round" style="paint-order:stroke">National Park</text>
<text x="712" y="306" font-size="12.5" textLength="40.0" lengthAdjust="spacingAndGlyphs" fill="#2a3a2a" font-weight="normal" opacity="1" stroke="#787878" stroke-width="1.8" stroke-linejoin="round" style="paint-order:stroke">Blue</text>
<text x="700.3" y="318" font-size="12.5" textLength="61.3" lengthAdjust="spacingAndGlyphs" fill="#2a3a2a" font-weight="normal" opacity="1" stroke="#787878" stroke-width="1.8" stroke-linejoin="round" style="paint-order:stroke">Mountains</text>
<text x="692.7" y="330" font-size="12.5" textLength="76.9" lengthAdjust="spacingAndGlyphs" fill="#2a3a2a" font-weight="normal" opacity="1" stroke="#787878" stroke-width="1.8" stroke-linejoin="round" style="paint-order:stroke">National Park</text>
<text x="820.5" y="233" font-size="13" textLength="59.5" lengthAdjust="spacingAndGlyphs" fill="#1c1c1c" font-weight="normal" opacity="1" stroke="#787878" stroke-width="1.8" stroke-linejoin="round" style="paint-order:stroke">Newcastle</text>
<circle cx="851.5" cy="239" r="2.2" fill="#6a6a6a" fill-opacity=".6" stroke="#1c1c1c" stroke-width="1.1"/>
<text x="780.7" y="279" font-size="12.6" textLength="80.3" lengthAdjust="spacingAndGlyphs" fill="#1c1c1c" font-weight="normal" opacity="1" stroke="#787878" stroke-width="1.8" stroke-linejoin="round" style="paint-order:stroke">Central Coast</text>
<circle cx="820.5" cy="284.5" r="2" fill="#6a6a6a" fill-opacity=".6" stroke="#1c1c1c" stroke-width="1.1"/>
<text x="775.7" y="334.7" font-size="14.5" textLength="47.3" lengthAdjust="spacingAndGlyphs" fill="#141414" font-weight="bold" opacity="1" stroke="#787878" stroke-width="1.8" stroke-linejoin="round" style="paint-order:stroke">Sydney</text>
<circle cx="799.5" cy="341.5" r="2.4" fill="#6a6a6a" fill-opacity=".6" stroke="#1c1c1c" stroke-width="1.1"/>
<text x="736" y="398.3" font-size="13" textLength="70.4" lengthAdjust="spacingAndGlyphs" fill="#1c1c1c" font-weight="normal" opacity="1" stroke="#787878" stroke-width="1.8" stroke-linejoin="round" style="paint-order:stroke">Wollongong</text>
<circle cx="771" cy="402.5" r="2.2" fill="#6a6a6a" fill-opacity=".6" stroke="#1c1c1c" stroke-width="1.1"/>
<text x="921" y="73.5" font-size="12.6" textLength="67.0" lengthAdjust="spacingAndGlyphs" fill="#1c1c1c" font-weight="normal" opacity="1" stroke="#787878" stroke-width="1.8" stroke-linejoin="round" style="paint-order:stroke">Macquarie</text>
<text x="372.6" y="267.3" font-size="15" textLength="207.5" lengthAdjust="spacingAndGlyphs" fill="#fff" opacity="0.6">For development purposes only</text>
<text x="628.6" y="267.3" font-size="15" textLength="207.5" lengthAdjust="spacingAndGlyphs" fill="#fff" opacity="0.6">For development purposes only</text>
<text x="884.6" y="267.3" font-size="15" textLength="207.5" lengthAdjust="spacingAndGlyphs" fill="#fff" opacity="0.6">For development purposes only</text>
<text x="1140.6" y="267.3" font-size="15" textLength="207.5" lengthAdjust="spacingAndGlyphs" fill="#fff" opacity="0.6">For development purposes only</text>
<defs><filter id="tex" filterUnits="userSpaceOnUse" x="430" y="59" width="765" height="443" color-interpolation-filters="sRGB"><feTurbulence type="fractalNoise" baseFrequency="0.045" numOctaves="2" seed="11" result="w"/><feDisplacementMap in="SourceGraphic" in2="w" scale="14" xChannelSelector="R" yChannelSelector="G" result="disp"/><feTurbulence type="fractalNoise" baseFrequency="0.33" numOctaves="2" seed="4" result="n1"/><feColorMatrix in="n1" type="matrix" values="0 0 0 0 0  0 0 0 0 0  0 0 0 0 0  44 0 0 0 -15.2" result="m1"/><feTurbulence type="fractalNoise" baseFrequency="0.07 0.09" numOctaves="2" seed="23" result="n2"/><feColorMatrix in="n2" type="matrix" values="0 0 0 0 0  0 0 0 0 0  0 0 0 0 0  0 60 0 0 -22" result="m2"/><feComposite in="disp" in2="m1" operator="in" result="c1"/><feComposite in="c1" in2="m2" operator="in"/></filter><filter id="tex2" filterUnits="userSpaceOnUse" x="430" y="59" width="765" height="443" color-interpolation-filters="sRGB"><feTurbulence type="fractalNoise" baseFrequency="0.06" numOctaves="2" seed="5" result="w"/><feDisplacementMap in="SourceGraphic" in2="w" scale="9" xChannelSelector="R" yChannelSelector="G" result="disp"/><feTurbulence type="fractalNoise" baseFrequency="0.33" numOctaves="2" seed="9" result="n1"/><feColorMatrix in="n1" type="matrix" values="0 0 0 0 0  0 0 0 0 0  0 0 0 0 0  44 0 0 0 -15.2" result="m1"/><feComposite in="disp" in2="m1" operator="in"/></filter><filter id="texpark" filterUnits="userSpaceOnUse" x="430" y="59" width="765" height="443" color-interpolation-filters="sRGB"><feTurbulence type="fractalNoise" baseFrequency="0.05" numOctaves="3" seed="31" result="w"/><feDisplacementMap in="SourceGraphic" in2="w" scale="22" xChannelSelector="R" yChannelSelector="G" result="disp"/><feTurbulence type="fractalNoise" baseFrequency="0.06 0.08" numOctaves="2" seed="17" result="n2"/><feColorMatrix in="n2" type="matrix" values="0 0 0 0 0  0 0 0 0 0  0 0 0 0 0  0 50 0 0 -19.4" result="m2"/><feComposite in="disp" in2="m2" operator="in"/></filter><filter id="texF" filterUnits="userSpaceOnUse" x="430" y="59" width="765" height="443" color-interpolation-filters="sRGB"><feTurbulence type="fractalNoise" baseFrequency="0.045" numOctaves="2" seed="11" result="w"/><feDisplacementMap in="SourceGraphic" in2="w" scale="14" xChannelSelector="R" yChannelSelector="G" result="disp"/><feTurbulence type="fractalNoise" baseFrequency="0.36" numOctaves="2" seed="41" result="n1"/><feColorMatrix in="n1" type="matrix" values="0 0 0 0 0  0 0 0 0 0  0 0 0 0 0  50 0 0 0 -26.9" result="m1"/><feComposite in="disp" in2="m1" operator="in"/></filter><filter id="tex2F" filterUnits="userSpaceOnUse" x="430" y="59" width="765" height="443" color-interpolation-filters="sRGB"><feTurbulence type="fractalNoise" baseFrequency="0.06" numOctaves="2" seed="5" result="w"/><feDisplacementMap in="SourceGraphic" in2="w" scale="9" xChannelSelector="R" yChannelSelector="G" result="disp"/><feTurbulence type="fractalNoise" baseFrequency="0.36" numOctaves="2" seed="43" result="n1"/><feColorMatrix in="n1" type="matrix" values="0 0 0 0 0  0 0 0 0 0  0 0 0 0 0  50 0 0 0 -26.9" result="m1"/><feComposite in="disp" in2="m1" operator="in"/></filter><filter id="sparse" filterUnits="userSpaceOnUse" x="430" y="59" width="765" height="443" color-interpolation-filters="sRGB"><feTurbulence type="fractalNoise" baseFrequency="0.4" numOctaves="2" seed="7" result="n1"/><feColorMatrix in="n1" type="matrix" values="0 0 0 0 0  0 0 0 0 0  0 0 0 0 0  50 0 0 0 -29" result="m1"/><feComposite in="SourceGraphic" in2="m1" operator="in"/></filter></defs>
<clipPath id="landclip"><path d="M969.3 59 L966 70 L962 80 L956.6 88.5 L947.2 99.2 L943.2 108.6 L939.2 119.3 L928.4 130 L921.7 140.8 L918.8 155.5 L921 163.5 L925.8 171.6 L920.8 183.6 L912.8 189.7 L904.7 195.7 L896.7 203.7 L890.7 209 L884 217 L880 225.2 L865.1 228.2 L855.1 236.2 L849 240.3 L841 248.3 L838 258.3 L833 266.4 L829 278.4 L820.9 288.5 L816.9 298.5 L810.9 306.6 L806.8 318.6 L806.8 330.7 L802.8 338 L800.8 350.1 L794.8 364.2 L788.7 370.2 L780.7 380.3 L772.7 390.3 L770.7 402.4 L768.6 414.4 L766.6 420.5 L764.6 434.5 L758.6 446.6 L756.6 458.6 L761.7 465.8 L764.7 471.8 L759.7 479.8 L751.7 487.8 L747.7 501 L430 501 L430 59Z"/></clipPath>
<g clip-path="url(#landclip)">
<g filter="url(#texF)">
<path d="M858.5 59.0 L864.5 67.0 L869.5 71.1 L872.6 66.0 L878.6 63.0 L882.6 59.0 L941.9 59.0 L945.9 67.0 L947.9 77.1 L943.9 89.2 L940.9 99.2 L936.9 111.3 L930.9 117.3 L926.8 119.3 L920.8 117.3 L918.8 109.3 L914.8 105.2 L912.8 117.3 L908.7 125.3 L902.7 119.3 L898.7 111.3 L894.7 109.3 L890.7 114.3 L888.6 125.3 L892.7 133.4 L890.7 139.4 L886.6 131.4 L880.6 123.3 L875.6 119.3 L872.6 125.3 L866.5 127.3 L860.5 123.3 L854.5 117.3 L848.4 109.3 L854.5 107.2 L860.5 105.2 L863.5 99.2 L862.5 91.2 L860.5 83.1 L856.5 79.1 L858.5 71.1 L856.5 65.0Z" fill="none" stroke="#82a85a" stroke-width="9" stroke-linejoin="round"/>
<path d="M718.4 220.2 L728.4 210.1 L740.5 206.1 L752.6 210.1 L756.6 218.1 L754.6 230.2 L748.5 240.3 L744.5 250.3 L740.5 260.4 L738.5 270.4 L744.5 274.4 L748.5 284.5 L744.5 294.5 L746.5 306.6 L744.5 314.6 L740.5 326.7 L744.5 339.9 L686.2 339.9 L688.2 330.7 L692.3 320.7 L700.3 314.6 L706.3 306.6 L710.4 296.5 L706.3 286.5 L708.3 278.4 L704.3 274.4 L706.3 266.4 L712.4 258.3 L716.4 248.3 L720.4 240.3 L716.4 230.2Z" fill="none" stroke="#82a85a" stroke-width="9" stroke-linejoin="round"/>
<path d="M796.8 238.2 L806.8 242.3 L816.9 244.3 L824.9 238.2 L828.9 234.2 L831.0 242.3 L824.9 250.3 L820.9 258.3 L816.9 266.4 L810.9 274.4 L800.8 278.4 L792.8 282.5 L784.7 286.5 L780.7 294.5 L778.7 306.6 L780.7 318.6 L778.7 328.7 L770.7 320.7 L760.6 318.6 L752.6 310.6 L750.6 298.5 L752.6 286.5 L758.6 278.4 L768.6 276.4 L776.7 270.4 L784.7 262.4 L792.8 252.3Z" fill="none" stroke="#82a85a" stroke-width="9" stroke-linejoin="round"/>
<path d="M686.2 326.0 L744.5 326.0 L740.5 342.1 L738.5 354.1 L734.5 366.2 L738.5 380.3 L736.5 388.3 L742.5 396.3 L738.5 400.4 L732.5 396.3 L726.4 398.3 L720.4 390.3 L716.4 382.3 L708.3 386.3 L702.3 380.3 L696.3 384.3 L690.3 378.2 L684.2 374.2 L680.2 366.2 L672.2 362.2 L676.2 354.1 L670.2 346.1 L678.2 338.0Z" fill="none" stroke="#82a85a" stroke-width="9" stroke-linejoin="round"/>
<path d="M720.4 424.5 L728.4 422.5 L744.5 424.5 L748.5 420.5 L760.6 424.5 L766.6 420.5 L760.6 438.5 L756.6 446.6 L742.5 444.6 L740.5 458.6 L742.5 470.7 L748.5 466.7 L752.6 454.6 L756.6 458.6 L762.6 466.7 L760.6 474.7 L752.6 479.9 L750.6 490.8 L698.3 490.8 L696.3 470.7 L690.3 460.7 L688.2 450.6 L698.3 442.6 L706.3 434.5 L714.4 430.5Z" fill="none" stroke="#82a85a" stroke-width="9" stroke-linejoin="round"/>
</g>
<g filter="url(#tex2F)">
<path d="M811.3 59.0 L817.3 62.0 L820.3 69.1 L826.3 75.1 L829.3 70.1 L835.4 69.1 L839.4 76.1 L837.4 82.1 L840.4 89.2 L837.4 99.2 L832.4 102.2 L829.3 108.2 L840.4 109.3 L846.4 108.2 L849.4 113.3 L856.5 112.3 L860.5 119.3 L868.5 121.3 L874.6 128.3 L871.6 131.4 L864.5 129.4 L860.5 125.3 L854.5 123.3 L850.5 119.3 L844.4 117.3 L839.4 114.3 L833.4 112.3 L828.3 110.3 L829.3 104.2 L827.3 99.2 L822.3 96.2 L818.3 99.2 L814.3 95.2 L808.2 94.2 L805.2 100.2 L803.2 106.2 L800.2 102.2 L795.2 102.2 L792.2 99.2 L797.2 95.2 L795.2 89.2 L799.2 83.1 L797.2 77.1 L802.2 73.1 L805.2 68.0 L809.2 65.0Z" fill="none" stroke="#82a85a" stroke-width="8" stroke-linejoin="round"/>
<path d="M811.3 125.3 L820.3 124.3 L838.4 127.3 L844.4 126.3 L849.4 132.4 L855.5 134.4 L858.5 141.4 L854.5 145.4 L857.5 149.5 L862.5 149.5 L863.5 156.5 L860.5 163.5 L862.5 171.6 L856.5 176.6 L851.5 170.6 L847.4 164.5 L840.4 160.5 L834.4 156.5 L829.3 154.5 L825.3 158.5 L821.3 164.5 L817.3 168.5 L813.9 162.5 L812.7 156.5 L808.2 154.5 L805.8 148.4 L799.2 147.4 L795.2 143.8 L803.2 141.8 L810.3 142.4 L812.7 137.0 L810.7 131.4Z" fill="none" stroke="#82a85a" stroke-width="8" stroke-linejoin="round"/>
<path d="M870.6 151.5 L876.6 153.5 L880.6 159.5 L884.6 167.5 L888.6 163.5 L892.7 159.5 L898.7 161.5 L900.7 167.5 L898.7 175.6 L900.7 183.6 L904.7 189.7 L900.7 195.7 L892.7 199.7 L888.6 203.7 L884.6 208.9 L869.5 208.9 L867.5 199.7 L869.5 189.7 L872.6 183.6 L871.6 175.6 L872.6 167.5 L870.6 159.5Z" fill="none" stroke="#82a85a" stroke-width="8" stroke-linejoin="round"/>
<path d="M898.7 139.4 L904.7 135.4 L912.8 134.4 L920.8 135.4 L921.8 141.4 L918.8 147.4 L916.8 155.5 L912.8 159.5 L904.7 160.5 L898.7 157.5 L896.7 149.5Z" fill="none" stroke="#82a85a" stroke-width="8" stroke-linejoin="round"/>
<path d="M900.7 187.6 L908.7 183.6 L918.8 184.6 L916.8 189.7 L908.7 193.7 L900.7 199.7 L892.7 207.7 L888.6 208.9 L880.6 208.9 L888.6 199.7 L896.7 193.7Z" fill="none" stroke="#82a85a" stroke-width="8" stroke-linejoin="round"/>
<path d="M760.0 199.7 L766.0 195.7 L774.1 199.7 L776.1 208.9 L760.0 208.9Z" fill="none" stroke="#82a85a" stroke-width="8" stroke-linejoin="round"/>
<path d="M840.4 199.7 L844.4 197.7 L846.4 205.7 L842.4 208.9Z" fill="none" stroke="#82a85a" stroke-width="8" stroke-linejoin="round"/>
<path d="M836.4 59.0 L860.5 59.0 L859.5 71.1 L854.5 78.1 L844.4 79.1 L838.4 75.1Z" fill="none" stroke="#82a85a" stroke-width="8" stroke-linejoin="round"/>
<path d="M795.2 150.5 L806.2 147.4 L814.3 153.5 L813.3 165.5 L806.2 170.6 L797.2 167.5Z" fill="none" stroke="#82a85a" stroke-width="8" stroke-linejoin="round"/>
<path d="M906.7 163.5 L920.8 162.5 L924.8 173.6 L918.8 181.6 L908.7 180.6Z" fill="none" stroke="#82a85a" stroke-width="8" stroke-linejoin="round"/>
<path d="M768.6 200.1 L774.7 204.1 L778.7 212.1 L772.7 218.1 L768.6 226.2 L764.6 232.2 L760.6 226.2 L764.6 218.1 L766.6 210.1Z" fill="none" stroke="#82a85a" stroke-width="8" stroke-linejoin="round"/>
<path d="M788.7 224.2 L796.8 220.2 L802.8 224.2 L800.8 232.2 L792.8 234.2 L788.7 230.2Z" fill="none" stroke="#82a85a" stroke-width="8" stroke-linejoin="round"/>
<path d="M849.0 202.1 L855.1 195.0 L863.1 190.0 L880.0 190.0 L880.0 201.1 L865.1 204.1 L860.1 210.1 L854.1 215.1 L850.1 212.1Z" fill="none" stroke="#82a85a" stroke-width="8" stroke-linejoin="round"/>
<path d="M828.9 250.3 L841.0 248.3 L849.0 252.3 L845.0 258.3 L833.0 256.3Z" fill="none" stroke="#82a85a" stroke-width="8" stroke-linejoin="round"/>
<path d="M859.1 228.2 L863.1 226.2 L861.1 242.3 L858.1 244.3Z" fill="none" stroke="#82a85a" stroke-width="8" stroke-linejoin="round"/>
<path d="M670.2 286.5 L678.2 278.4 L680.2 288.5 L674.2 294.5Z" fill="none" stroke="#82a85a" stroke-width="8" stroke-linejoin="round"/>
<path d="M656.1 322.7 L666.1 320.7 L664.1 330.7 L652.1 332.7Z" fill="none" stroke="#82a85a" stroke-width="8" stroke-linejoin="round"/>
<path d="M802.8 280.5 L816.9 278.4 L820.9 288.5 L812.9 296.5 L803.8 294.5Z" fill="none" stroke="#82a85a" stroke-width="8" stroke-linejoin="round"/>
<path d="M770.7 356.1 L780.7 360.2 L792.8 364.2 L788.7 374.2 L780.7 382.3 L772.7 390.3 L768.6 398.3 L760.6 410.4 L752.6 418.4 L746.5 420.5 L738.5 410.4 L736.5 404.4 L744.5 396.3 L752.6 388.3 L756.6 380.3 L762.6 374.2 L768.6 366.2Z" fill="none" stroke="#82a85a" stroke-width="8" stroke-linejoin="round"/>
</g>
<g filter="url(#tex)">
<path d="M858.5 59.0 L864.5 67.0 L869.5 71.1 L872.6 66.0 L878.6 63.0 L882.6 59.0 L941.9 59.0 L945.9 67.0 L947.9 77.1 L943.9 89.2 L940.9 99.2 L936.9 111.3 L930.9 117.3 L926.8 119.3 L920.8 117.3 L918.8 109.3 L914.8 105.2 L912.8 117.3 L908.7 125.3 L902.7 119.3 L898.7 111.3 L894.7 109.3 L890.7 114.3 L888.6 125.3 L892.7 133.4 L890.7 139.4 L886.6 131.4 L880.6 123.3 L875.6 119.3 L872.6 125.3 L866.5 127.3 L860.5 123.3 L854.5 117.3 L848.4 109.3 L854.5 107.2 L860.5 105.2 L863.5 99.2 L862.5 91.2 L860.5 83.1 L856.5 79.1 L858.5 71.1 L856.5 65.0Z" fill="#82a85a"/>
<path d="M718.4 220.2 L728.4 210.1 L740.5 206.1 L752.6 210.1 L756.6 218.1 L754.6 230.2 L748.5 240.3 L744.5 250.3 L740.5 260.4 L738.5 270.4 L744.5 274.4 L748.5 284.5 L744.5 294.5 L746.5 306.6 L744.5 314.6 L740.5 326.7 L744.5 339.9 L686.2 339.9 L688.2 330.7 L692.3 320.7 L700.3 314.6 L706.3 306.6 L710.4 296.5 L706.3 286.5 L708.3 278.4 L704.3 274.4 L706.3 266.4 L712.4 258.3 L716.4 248.3 L720.4 240.3 L716.4 230.2Z" fill="#82a85a"/>
<path d="M796.8 238.2 L806.8 242.3 L816.9 244.3 L824.9 238.2 L828.9 234.2 L831.0 242.3 L824.9 250.3 L820.9 258.3 L816.9 266.4 L810.9 274.4 L800.8 278.4 L792.8 282.5 L784.7 286.5 L780.7 294.5 L778.7 306.6 L780.7 318.6 L778.7 328.7 L770.7 320.7 L760.6 318.6 L752.6 310.6 L750.6 298.5 L752.6 286.5 L758.6 278.4 L768.6 276.4 L776.7 270.4 L784.7 262.4 L792.8 252.3Z" fill="#82a85a"/>
<path d="M686.2 326.0 L744.5 326.0 L740.5 342.1 L738.5 354.1 L734.5 366.2 L738.5 380.3 L736.5 388.3 L742.5 396.3 L738.5 400.4 L732.5 396.3 L726.4 398.3 L720.4 390.3 L716.4 382.3 L708.3 386.3 L702.3 380.3 L696.3 384.3 L690.3 378.2 L684.2 374.2 L680.2 366.2 L672.2 362.2 L676.2 354.1 L670.2 346.1 L678.2 338.0Z" fill="#82a85a"/>
<path d="M720.4 424.5 L728.4 422.5 L744.5 424.5 L748.5 420.5 L760.6 424.5 L766.6 420.5 L760.6 438.5 L756.6 446.6 L742.5 444.6 L740.5 458.6 L742.5 470.7 L748.5 466.7 L752.6 454.6 L756.6 458.6 L762.6 466.7 L760.6 474.7 L752.6 479.9 L750.6 490.8 L698.3 490.8 L696.3 470.7 L690.3 460.7 L688.2 450.6 L698.3 442.6 L706.3 434.5 L714.4 430.5Z" fill="#82a85a"/>
</g>
<g filter="url(#tex2)">
<path d="M811.3 59.0 L817.3 62.0 L820.3 69.1 L826.3 75.1 L829.3 70.1 L835.4 69.1 L839.4 76.1 L837.4 82.1 L840.4 89.2 L837.4 99.2 L832.4 102.2 L829.3 108.2 L840.4 109.3 L846.4 108.2 L849.4 113.3 L856.5 112.3 L860.5 119.3 L868.5 121.3 L874.6 128.3 L871.6 131.4 L864.5 129.4 L860.5 125.3 L854.5 123.3 L850.5 119.3 L844.4 117.3 L839.4 114.3 L833.4 112.3 L828.3 110.3 L829.3 104.2 L827.3 99.2 L822.3 96.2 L818.3 99.2 L814.3 95.2 L808.2 94.2 L805.2 100.2 L803.2 106.2 L800.2 102.2 L795.2 102.2 L792.2 99.2 L797.2 95.2 L795.2 89.2 L799.2 83.1 L797.2 77.1 L802.2 73.1 L805.2 68.0 L809.2 65.0Z" fill="#82a85a"/>
<path d="M811.3 125.3 L820.3 124.3 L838.4 127.3 L844.4 126.3 L849.4 132.4 L855.5 134.4 L858.5 141.4 L854.5 145.4 L857.5 149.5 L862.5 149.5 L863.5 156.5 L860.5 163.5 L862.5 171.6 L856.5 176.6 L851.5 170.6 L847.4 164.5 L840.4 160.5 L834.4 156.5 L829.3 154.5 L825.3 158.5 L821.3 164.5 L817.3 168.5 L813.9 162.5 L812.7 156.5 L808.2 154.5 L805.8 148.4 L799.2 147.4 L795.2 143.8 L803.2 141.8 L810.3 142.4 L812.7 137.0 L810.7 131.4Z" fill="#82a85a"/>
<path d="M870.6 151.5 L876.6 153.5 L880.6 159.5 L884.6 167.5 L888.6 163.5 L892.7 159.5 L898.7 161.5 L900.7 167.5 L898.7 175.6 L900.7 183.6 L904.7 189.7 L900.7 195.7 L892.7 199.7 L888.6 203.7 L884.6 208.9 L869.5 208.9 L867.5 199.7 L869.5 189.7 L872.6 183.6 L871.6 175.6 L872.6 167.5 L870.6 159.5Z" fill="#82a85a"/>
<path d="M898.7 139.4 L904.7 135.4 L912.8 134.4 L920.8 135.4 L921.8 141.4 L918.8 147.4 L916.8 155.5 L912.8 159.5 L904.7 160.5 L898.7 157.5 L896.7 149.5Z" fill="#82a85a"/>
<path d="M900.7 187.6 L908.7 183.6 L918.8 184.6 L916.8 189.7 L908.7 193.7 L900.7 199.7 L892.7 207.7 L888.6 208.9 L880.6 208.9 L888.6 199.7 L896.7 193.7Z" fill="#82a85a"/>
<path d="M760.0 199.7 L766.0 195.7 L774.1 199.7 L776.1 208.9 L760.0 208.9Z" fill="#82a85a"/>
<path d="M840.4 199.7 L844.4 197.7 L846.4 205.7 L842.4 208.9Z" fill="#82a85a"/>
<path d="M836.4 59.0 L860.5 59.0 L859.5 71.1 L854.5 78.1 L844.4 79.1 L838.4 75.1Z" fill="#82a85a"/>
<path d="M795.2 150.5 L806.2 147.4 L814.3 153.5 L813.3 165.5 L806.2 170.6 L797.2 167.5Z" fill="#82a85a"/>
<path d="M906.7 163.5 L920.8 162.5 L924.8 173.6 L918.8 181.6 L908.7 180.6Z" fill="#82a85a"/>
<path d="M768.6 200.1 L774.7 204.1 L778.7 212.1 L772.7 218.1 L768.6 226.2 L764.6 232.2 L760.6 226.2 L764.6 218.1 L766.6 210.1Z" fill="#82a85a"/>
<path d="M788.7 224.2 L796.8 220.2 L802.8 224.2 L800.8 232.2 L792.8 234.2 L788.7 230.2Z" fill="#82a85a"/>
<path d="M849.0 202.1 L855.1 195.0 L863.1 190.0 L880.0 190.0 L880.0 201.1 L865.1 204.1 L860.1 210.1 L854.1 215.1 L850.1 212.1Z" fill="#82a85a"/>
<path d="M828.9 250.3 L841.0 248.3 L849.0 252.3 L845.0 258.3 L833.0 256.3Z" fill="#82a85a"/>
<path d="M859.1 228.2 L863.1 226.2 L861.1 242.3 L858.1 244.3Z" fill="#82a85a"/>
<path d="M670.2 286.5 L678.2 278.4 L680.2 288.5 L674.2 294.5Z" fill="#82a85a"/>
<path d="M656.1 322.7 L666.1 320.7 L664.1 330.7 L652.1 332.7Z" fill="#82a85a"/>
<path d="M802.8 280.5 L816.9 278.4 L820.9 288.5 L812.9 296.5 L803.8 294.5Z" fill="#82a85a"/>
<path d="M770.7 356.1 L780.7 360.2 L792.8 364.2 L788.7 374.2 L780.7 382.3 L772.7 390.3 L768.6 398.3 L760.6 410.4 L752.6 418.4 L746.5 420.5 L738.5 410.4 L736.5 404.4 L744.5 396.3 L752.6 388.3 L756.6 380.3 L762.6 374.2 L768.6 366.2Z" fill="#82a85a"/>
</g>
<g filter="url(#sparse)">
<path d="M644.0 340.1 L652.1 336.0 L660.1 342.1 L668.1 350.1 L664.1 358.1 L652.1 354.1 L644.0 348.1Z" fill="#82a85a"/>
<path d="M640.0 336.3 L658.1 333.3 L673.2 345.3 L670.2 360.4 L652.1 363.4 L640.0 354.4Z" fill="#82a85a"/>
<path d="M670.2 309.2 L694.3 306.2 L695.8 336.3 L676.2 339.3Z" fill="#82a85a"/>
<path d="M646.0 321.2 L670.2 318.2 L670.2 333.3 L647.5 334.8Z" fill="#82a85a"/>
<path d="M691.3 227.8 L718.4 221.8 L718.4 283.9 L697.3 283.9Z" fill="#82a85a"/>
<path d="M754.6 203.7 L784.7 200.7 L787.7 245.9 L760.6 245.9Z" fill="#82a85a"/>
<path d="M644.5 345.0 L670.0 345.0 L670.0 360.0 L646.6 360.0Z" fill="#82a85a"/>
<path d="M685.2 420.7 L718.4 417.7 L700.3 462.9 L685.2 469.0Z" fill="#82a85a"/>
</g>
</g>
<path d="M892.7 93.2 L900.7 92.2 L902.7 99.2 L896.7 102.2 L891.7 99.2Z" fill="#636363"/>
<path d="M872.6 97.2 L877.6 95.2 L885.6 109.3 L881.6 112.3Z" fill="#636363"/>
<path d="M906.7 85.1 L912.8 83.1 L918.8 91.2 L912.8 97.2 L908.7 93.2Z" fill="#636363"/>
<path d="M888.6 78.1 L894.7 77.1 L893.7 84.1 L889.6 85.1Z" fill="#636363"/>
<path d="M864.5 77.1 L869.5 75.1 L877.6 91.2 L872.6 93.2Z" fill="#4d724b"/>
<path d="M916.8 71.1 L926.8 70.1 L928.8 76.1 L920.8 78.1Z" fill="#636363"/>
<path d="M872.6 163.5 L877.6 161.5 L878.6 168.5 L873.6 169.6Z" fill="#4d724b"/>
<path d="M752.6 250.3 L764.6 242.3 L768.6 248.3 L758.6 258.3Z" fill="#4d724b"/>
<path d="M724.4 290.5 L734.5 288.5 L736.5 296.5 L726.4 298.5Z" fill="#4d724b"/>
<path d="M706.3 342.1 L716.4 340.1 L720.4 352.1 L710.4 356.1Z" fill="#4d724b"/>
<path d="M714.4 442.6 L726.4 438.5 L730.5 450.6 L720.4 458.6 L712.4 454.6Z" fill="#4d724b"/>
<path d="M700.3 458.6 L710.4 460.7 L708.3 474.7 L700.3 472.7Z" fill="#4d724b"/>
<rect x="693.3" y="420.5" width="24.5" height="10.0" fill="#3b4630"/><text x="705.5" y="428.2" font-size="8.6" font-weight="bold" fill="#b9bdb2" text-anchor="middle">M31</text>
<rect x="864.6" y="203.0" width="16.4" height="9.8" fill="#3b4630"/><text x="872.8" y="210.5" font-size="8.6" font-weight="bold" fill="#b9bdb2" text-anchor="middle">A1</text>
<circle cx="838.0" cy="106.8" r="1.6" fill="#d8412f"/>
<circle cx="945.9" cy="61.4" r="1.6" fill="#d8412f"/>
<circle cx="884.6" cy="207.3" r="1.6" fill="#d8412f"/>
<circle cx="703.9" cy="310.0" r="1.6" fill="#d8412f"/>
<circle cx="747.9" cy="315.8" r="1.6" fill="#d8412f"/>
<circle cx="836.6" cy="236.6" r="1.6" fill="#d8412f"/>
<circle cx="864.5" cy="225.2" r="1.6" fill="#d8412f"/>
<circle cx="828.9" cy="280.9" r="1.6" fill="#d8412f"/>
<circle cx="821.9" cy="274.4" r="1.6" fill="#d8412f"/>
<circle cx="829.9" cy="259.3" r="1.6" fill="#d8412f"/>
<circle cx="778.7" cy="322.7" r="1.6" fill="#d8412f"/>
<circle cx="805.8" cy="323.1" r="1.6" fill="#d8412f"/>
<circle cx="801.8" cy="328.7" r="1.6" fill="#d8412f"/>
<circle cx="761.6" cy="371.6" r="1.6" fill="#d8412f"/>
<circle cx="782.7" cy="360.8" r="1.6" fill="#d8412f"/>
<circle cx="789.7" cy="363.8" r="1.6" fill="#d8412f"/>
<circle cx="800.8" cy="330.0" r="1.6" fill="#d8412f"/>
<circle cx="848" cy="68" r="10" fill="#3498db" fill-opacity="0.45" stroke="#3498db" stroke-width="1.8"/>
<circle cx="851.4" cy="93.5" r="13" fill="#3498db" fill-opacity="0.95" stroke="#3498db" stroke-width="1.8"/>
<circle cx="853" cy="88" r="11" fill="#3498db" fill-opacity="0.6" stroke="#3498db" stroke-width="1.8"/>
<circle cx="827.3" cy="128.3" r="10" fill="#3498db" fill-opacity="0.45" stroke="#3498db" stroke-width="1.8"/>
<circle cx="803.6" cy="160.1" r="10" fill="#3498db" fill-opacity="0.45" stroke="#3498db" stroke-width="1.8"/>
<circle cx="906.3" cy="149.5" r="10" fill="#3498db" fill-opacity="0.45" stroke="#3498db" stroke-width="1.8"/>
<circle cx="915.4" cy="172.6" r="10" fill="#3498db" fill-opacity="0.5" stroke="#3498db" stroke-width="1.8"/>
<circle cx="935.5" cy="105.2" r="5.2" fill="#3498db" fill-opacity="0.45" stroke="#3498db" stroke-width="1.8"/>
<circle cx="941.5" cy="81.5" r="13" fill="#3498db" fill-opacity="0.9" stroke="#3498db" stroke-width="1.8"/>
<circle cx="957" cy="78.1" r="8.5" fill="#3498db" fill-opacity="0.5" stroke="#3498db" stroke-width="1.8"/>
<circle cx="959" cy="63" r="10" fill="#3498db" fill-opacity="0.45" stroke="#3498db" stroke-width="1.8"/>
<circle cx="892.7" cy="58" r="11" fill="#3498db" fill-opacity="0.5" stroke="#3498db" stroke-width="1.8"/>
<circle cx="902" cy="54" r="9" fill="#3498db" fill-opacity="0.6" stroke="#3498db" stroke-width="1.8"/>
<circle cx="844.4" cy="226.2" r="10" fill="#3498db" fill-opacity="0.4" stroke="#3498db" stroke-width="1.8"/>
<circle cx="810.5" cy="287.9" r="10" fill="#3498db" fill-opacity="0.45" stroke="#3498db" stroke-width="1.8"/>
<circle cx="790.8" cy="297.5" r="10" fill="#3498db" fill-opacity="0.5" stroke="#3498db" stroke-width="1.8"/>
<circle cx="790.8" cy="306.6" r="10" fill="#3498db" fill-opacity="0.5" stroke="#3498db" stroke-width="1.8"/>
<circle cx="789.7" cy="320.7" r="10.5" fill="#3498db" fill-opacity="0.9" stroke="#3498db" stroke-width="1.8"/>
<circle cx="680.2" cy="388.3" r="10.5" fill="#3498db" fill-opacity="0.6" stroke="#3498db" stroke-width="1.8"/>
<circle cx="681" cy="385" r="10" fill="#3498db" fill-opacity="0.4" stroke="#3498db" stroke-width="1.8"/>
<circle cx="733" cy="437" r="10" fill="#3498db" fill-opacity="0.45" stroke="#3498db" stroke-width="1.8"/>
<circle cx="756" cy="431.5" r="10.5" fill="#3498db" fill-opacity="0.55" stroke="#3498db" stroke-width="1.8"/>
<circle cx="735" cy="486.5" r="12.5" fill="#3498db" fill-opacity="0.9" stroke="#3498db" stroke-width="1.8"/>
<circle cx="738" cy="488" r="15" fill="#3498db" fill-opacity="0.9" stroke="#3498db" stroke-width="1.8"/>
<circle cx="697.9" cy="490.8" r="10.4" fill="#3498db" fill-opacity="0.5" stroke="#3498db" stroke-width="1.8"/>
<circle cx="844.4" cy="226.5" r="4.5" fill="#b07aa8" opacity=".8"/>
<circle cx="710.8" cy="475.8" r="2" fill="#3498db"/>
<circle cx="897.5" cy="178.5" r="1.8" fill="#3498db"/>
<rect x="430.8" y="70" width="1.1" height="11" fill="#2e3527"/>
<rect x="502" y="482.3" width="500" height="1.9" fill="#000" opacity=".45"/>
<rect x="502" y="487.5" width="457" height="14" fill="#000" opacity=".5"/>
<rect x="959" y="487.5" width="236" height="14" fill="#f5f5f5" opacity=".72"/>
<text x="963.9" y="497.6" font-size="10" textLength="152.7" lengthAdjust="spacingAndGlyphs" fill="#444">Map data ©2020 GBRMPA, Google</text>
<text x="1129.2" y="497.6" font-size="10" textLength="57.8" lengthAdjust="spacingAndGlyphs" fill="#444">Terms of Use</text>
<text x="437.4" y="492.9" font-size="20.4" textLength="61.8" lengthAdjust="spacingAndGlyphs" fill="#fff" stroke="#fff" stroke-width=".55">Google</text>
<rect x="1144" y="71" width="40" height="40.2" rx="2" fill="#000" opacity=".18"/>
<rect x="1144" y="397.2" width="40" height="81" rx="2" fill="#000" opacity=".18"/>
<rect x="1144" y="69.8" width="40" height="40.2" rx="2" fill="#fff"/>
<path d="M1156 87 V82 H1161 M1167 82 H1172 V87 M1172 93 V98 H1167 M1161 98 H1156 V93" fill="none" stroke="#666" stroke-width="2"/>
<rect x="1144" y="396" width="40" height="81" rx="2" fill="#fff"/>
<rect x="1149" y="436" width="30" height="1" fill="#e6e6e6"/>
<path d="M1155 416 H1173 M1164 407 V425 M1155 456.7 H1173" stroke="#666" stroke-width="3.2" fill="none"/>
</svg>
</div>
</body></html>
